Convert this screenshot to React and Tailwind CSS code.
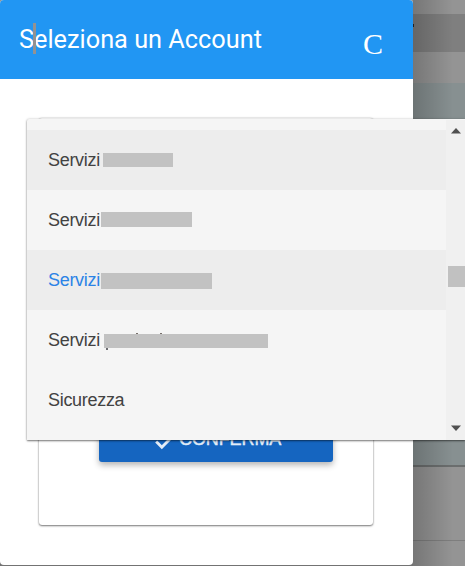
const options = [
  { label: 'Servizi', row: 'bg-[#ededed] text-[#424242]', bar: 'ml-[3px] h-[14px] w-[70px]' },
  { label: 'Servizi', row: 'text-[#424242]', bar: 'mb-[2px] ml-px h-[15px] w-[91px]' },
  { label: 'Servizi', row: 'bg-[#ededed] text-[#2b83e6]', bar: 'ml-px mt-[2px] h-4 w-[111px]' },
  { label: 'Servizi', row: 'text-[#424242]', bar: 'ml-1 mt-[2px] h-[14px] w-[164px]', partial: true },
  { label: 'Sicurezza', row: 'text-[#424242]' },
];

function Option({ option }) {
  return (
    <li className={`flex h-[60px] shrink-0 items-center pl-[21px] font-['Liberation_Sans',sans-serif] text-[18px] leading-[26px] tracking-[-0.3px] ${option.row}`}>
      <span className={option.bar ? 'w-[52px] whitespace-nowrap' : ''}>{option.label}</span>
      {option.bar && (
        <span className={`relative shrink-0 bg-[#c2c2c2] ${option.bar}`}>
          {option.partial && (
            <>
              <span className="absolute -top-px left-8 h-px w-[2px] bg-[#77706b]" />
              <span className="absolute -top-px left-14 h-px w-[2px] bg-[#77706b]" />
              <span className="absolute left-[2px] top-[14px] h-[2px] w-[2px] bg-[#6b6b70]" />
            </>
          )}
        </span>
      )}
    </li>
  );
}

function Backdrop() {
  return (
    <div className="flex h-full flex-col bg-[#949494]">
      <div className="h-[14px]" />
      <div className="h-[38px] bg-[#7f7f7f]" />
      <div className="h-[31px]" />
      <div className="h-[384px] border-b-2 border-[#6b6e6e] bg-[#879091]" />
      <div className="h-[74px] border-b border-[#7e7e7e]" />
    </div>
  );
}

function Dialog() {
  return (
    <section className="absolute left-0 top-0 flex h-[565px] w-[413px] flex-col overflow-hidden rounded-[4px] bg-white">
      <header className="flex h-[79px] shrink-0 justify-between bg-[#2196f3] pl-[19px] pr-[30px] text-white">
        <h1 className="relative pt-[21px] text-[25.3px] leading-[38px]">
          Seleziona un Account
          <span className="absolute left-[14px] top-[23px] h-[31px] w-[3px] bg-[#929292]" />
        </h1>
        <span className="pt-[26px] font-['Liberation_Serif',serif] text-[30px] leading-9">C</span>
      </header>
      <div className="px-[39px] pt-[39px]">
        <div className="flex h-[407px] w-[334px] items-end rounded-[3px] pb-[63px] pl-[60px] shadow-[0_1px_2px_rgba(0,0,0,0.5),0_0_2px_rgba(0,0,0,0.2)]">
          <button className="flex h-[46px] w-[234px] items-center rounded-[3px] bg-[#1565c0] pl-[52px] font-['Liberation_Sans',sans-serif] text-[18px] tracking-[-0.1px] text-[#e3edf8] shadow-[0_3px_6px_rgba(0,0,0,0.3)]">
            <svg className="mr-[2px] mt-1 h-[26px] w-[26px] shrink-0" viewBox="0 0 24 24" fill="none" stroke="currentColor" strokeWidth="2.7">
              <path d="m4.8 12.5 5.2 5.2L21.2 6.5" />
            </svg>
            <span className="[-webkit-text-stroke:0.4px_#e3edf8]">CONFERMA</span>
          </button>
        </div>
      </div>
    </section>
  );
}

function Menu() {
  return (
    <div className="absolute left-[27px] top-[119px] flex h-[321px] w-[438px] rounded-tl-[2px] bg-[#f5f5f5] shadow-[0_1px_2px_rgba(0,0,0,0.5),0_0_3px_rgba(0,0,0,0.16)]">
      <ul className="flex w-[419px] flex-col pt-[11px]">
        {options.map((option, i) => (
          <Option key={i} option={option} />
        ))}
      </ul>
      <div className="mt-px flex w-[19px] flex-col items-end bg-[#f0f0f0] pb-[9px] pt-2">
        <svg className="mr-1 h-[6px] w-[10px]" viewBox="0 0 10 6" fill="#505050">
          <path d="M5 0 10 5.5H0z" />
        </svg>
        <div className="mt-[132px] h-[21px] w-[17px] bg-[#c1c1c1]" />
        <svg className="mr-1 mt-auto h-[6px] w-[10px]" viewBox="0 0 10 6" fill="#505050">
          <path d="M0 .5h10L5 6z" />
        </svg>
      </div>
    </div>
  );
}

export default function App() {
  return (
    <main className="relative h-[566px] w-[465px] overflow-hidden font-[Roboto,sans-serif]">
      <Backdrop />
      <div className="absolute inset-y-0 left-[413px] w-10 bg-gradient-to-r from-black/20 to-transparent" />
      <div className="absolute left-[413px] top-6 h-[3px] w-px bg-[#222222]" />
      <div className="absolute bottom-0 left-0 h-1 w-[413px] bg-[#737373]" />
      <Dialog />
      <Menu />
    </main>
  );
}
